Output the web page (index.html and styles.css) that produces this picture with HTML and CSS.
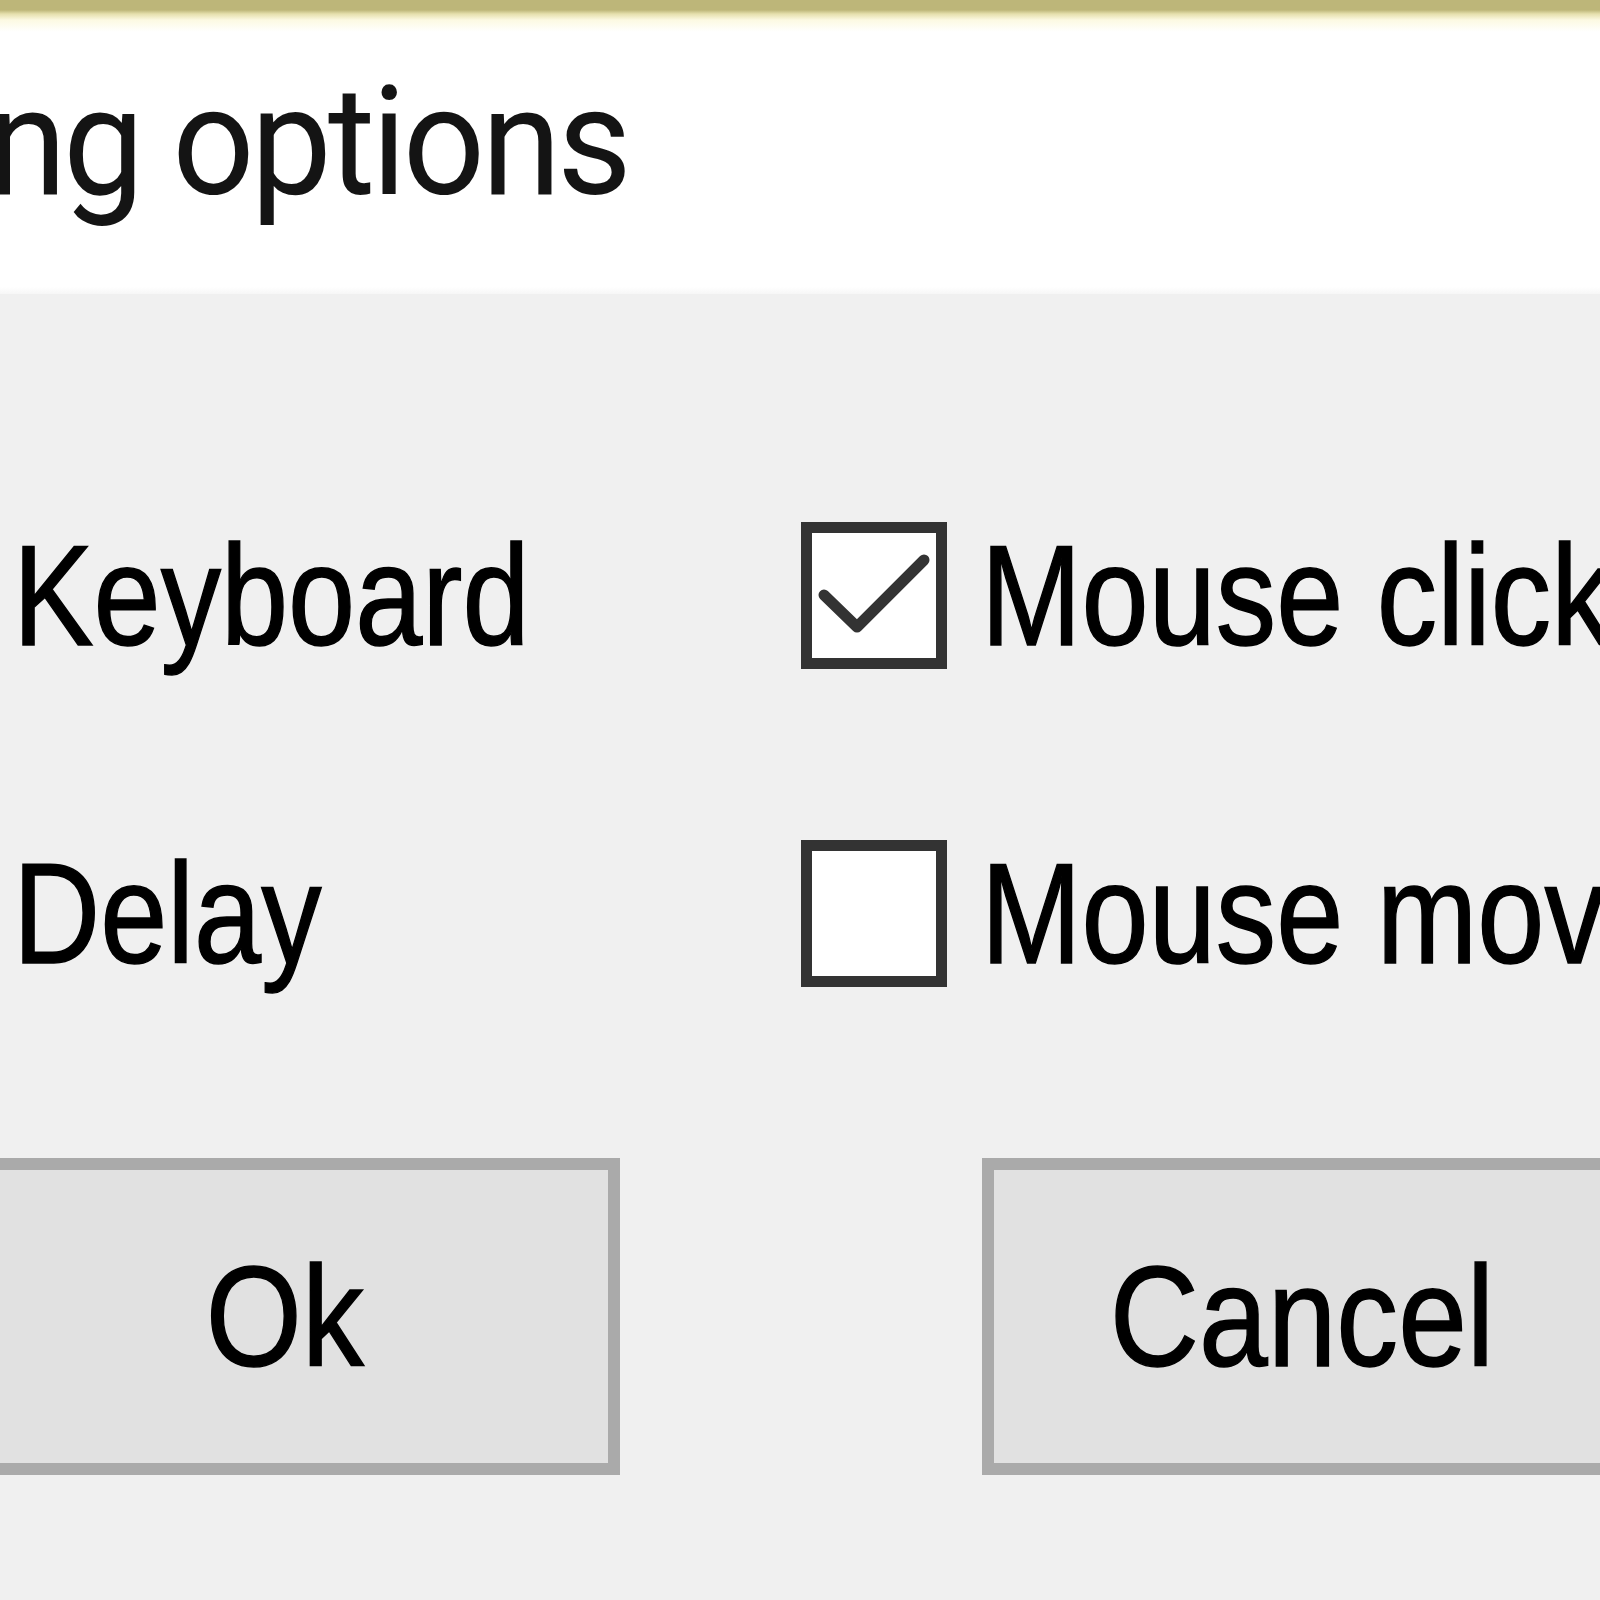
FILE: index.html
```html
<!DOCTYPE html>
<html lang="en">
<head>
<meta charset="utf-8">
<title>Recording options</title>
<link rel="stylesheet" href="styles.css">
</head>
<body>
<div class="window">
  <header class="header">
    <div class="title-wrap"><h1 class="title">Recording options</h1></div>
  </header>
  <main class="content">
    <div class="options">
      <label class="option">
        <span class="box"><svg class="tick" viewBox="0 0 124 125"><polyline points="12,62 45,94 112,27"/></svg></span>
        <span class="text">Keyboard</span>
      </label>
      <label class="option">
        <span class="box"><svg class="tick" viewBox="0 0 124 125"><polyline points="12,62 45,94 112,27"/></svg></span>
        <span class="text">Mouse clicks</span>
      </label>
      <label class="option">
        <span class="box"></span>
        <span class="text">Delay</span>
      </label>
      <label class="option">
        <span class="box"></span>
        <span class="text">Mouse move</span>
      </label>
    </div>
    <div class="buttons">
      <button class="btn btn-ok" type="button"><span class="btn-text">Ok</span></button>
      <button class="btn btn-cancel" type="button"><span class="btn-text">Cancel</span></button>
    </div>
  </main>
</div>
</body>
</html>
```
FILE: styles.css
```css
html, body {
  margin: 0;
  padding: 0;
  background: #f0f0f0;
  overflow: hidden;
}

.window {
  width: 1600px;
  height: 1600px;
  overflow: hidden;
}

.header {
  height: 294px;
  box-sizing: border-box;
  padding-top: 66px;
  background: linear-gradient(#bdb679 0, #bdb679 10px, #e6e0ae 14px, #fcf9e2 20px, #ffffff 32px, #ffffff 287px, #f0f0f0 299px);
}

.title-wrap {
  width: 628px;
  display: flex;
  justify-content: flex-end;
}

.title {
  flex: none;
  margin: 0;
  font: 400 152px/1 Roboto, "Open Sans", sans-serif;
  letter-spacing: -4px;
  white-space: nowrap;
  color: #141414;
  transform: scaleX(0.95);
  transform-origin: right center;
}

.content {
  padding-top: 228px;
}

.options {
  display: grid;
  grid-template-columns: 968px auto;
  row-gap: 171px;
  margin-left: -167px;
}

.option {
  display: flex;
  align-items: center;
  gap: 34px;
  font: 400 142px/1 "Liberation Sans", Arial, sans-serif;
  color: #000;
  white-space: nowrap;
}

.text {
  display: inline-block;
  transform: scaleX(0.85);
  transform-origin: left center;
  -webkit-text-stroke: 1.5px #000;
}

.box {
  flex: none;
  width: 146px;
  height: 147px;
  box-sizing: border-box;
  border: 11px solid #333;
  background: #fff;
}

.tick {
  display: block;
  width: 100%;
  height: 100%;
  fill: none;
  stroke: #333;
  stroke-width: 11;
  stroke-linecap: round;
  stroke-linejoin: round;
}

.buttons {
  display: flex;
  gap: 362px;
  margin-left: -50px;
  margin-top: 171px;
}

.btn {
  flex: none;
  height: 317px;
  box-sizing: border-box;
  border: 12px solid #aaaaaa;
  background: #e1e1e1;
  padding: 0;
  font: 400 142px/1 "Liberation Sans", Arial, sans-serif;
  color: #000;
}

.btn-text {
  display: inline-block;
  transform: scaleX(0.87);
  transform-origin: center;
  -webkit-text-stroke: 1.5px #000;
}

.btn-ok {
  width: 670px;
}

.btn-cancel {
  width: 640px;
}
```
